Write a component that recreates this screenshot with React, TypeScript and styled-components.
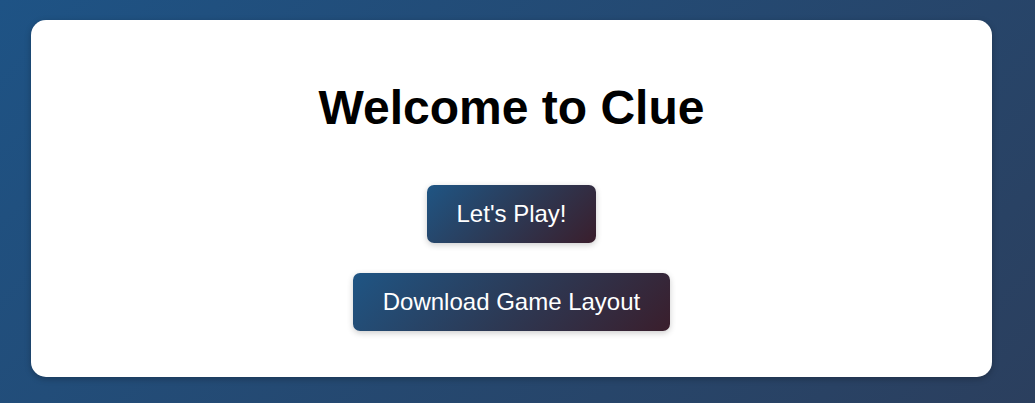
import React from "react";
import styled, { createGlobalStyle } from "styled-components";

const GlobalStyle = createGlobalStyle`
  html, body {
    margin: 0;
    padding: 0;
  }
  body {
    min-height: 403px;
    background: linear-gradient(135deg, #1e5385 0%, #2b3f5e 100%);
    font-family: "Liberation Sans", Arial, sans-serif;
  }
`;

const Page = styled.main`
  display: flex;
  padding: 20px 43px 26px 31px;
  min-height: 403px;
  box-sizing: border-box;
`;

const Card = styled.section`
  flex: 1;
  display: flex;
  flex-direction: column;
  align-items: center;
  background: #ffffff;
  border-radius: 15px;
  box-shadow: 0 2px 6px rgba(0, 0, 0, 0.25);
  padding: 60px 20px 46px;
`;

const Title = styled.h1`
  margin: 0 0 50px;
  font-size: 48px;
  font-weight: 700;
  color: #000;
  line-height: normal;
`;

const Button = styled.button<{ $gap?: number }>`
  margin-top: ${(p) => p.$gap ?? 0}px;
  padding: 15px 30px;
  font-family: "Liberation Sans", Arial, sans-serif;
  font-size: 24px;
  line-height: normal;
  color: #ffffff;
  border: none;
  border-radius: 7px;
  background: linear-gradient(135deg, #1f5584 0%, #2c3a56 50%, #3a1e2c 100%);
  box-shadow: 0 2px 6px rgba(0, 0, 0, 0.2);
  cursor: pointer;
`;

export default function App() {
  return (
    <>
      <GlobalStyle />
      <Page>
        <Card>
          <Title>Welcome to Clue</Title>
          <Button>Let's Play!</Button>
          <Button $gap={30}>Download Game Layout</Button>
        </Card>
      </Page>
    </>
  );
}
